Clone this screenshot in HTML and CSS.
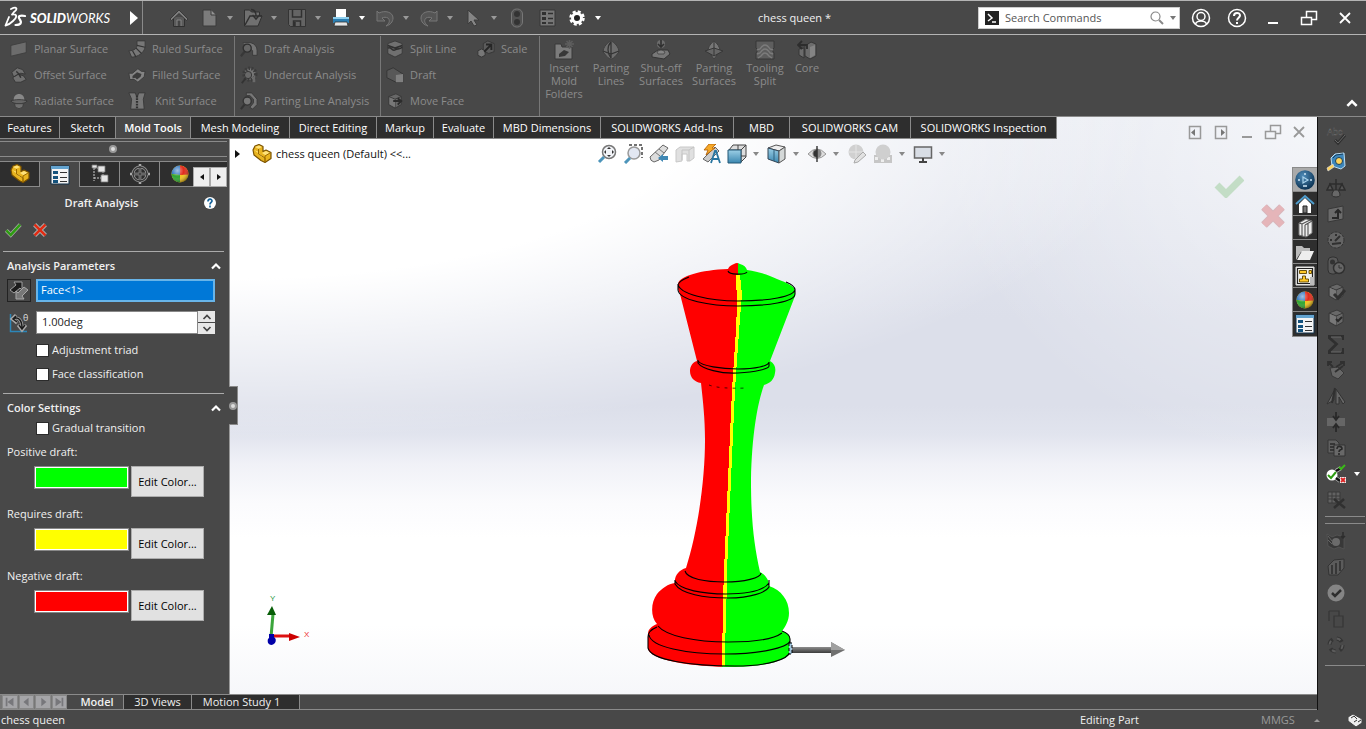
FILE: index.html
```html
<!DOCTYPE html>
<html lang="en">
<head>
<meta charset="utf-8">
<title>SOLIDWORKS - chess queen</title>
<link rel="stylesheet" href="styles.css">
</head>
<body>
<svg class="defs" aria-hidden="true">
  <defs>
    <linearGradient id="cubeBlue" x1="0" y1="0" x2="0" y2="1"><stop offset="0" stop-color="#9ccfe6"/><stop offset="1" stop-color="#3b87b0"/></linearGradient>
    <linearGradient id="metal" x1="0" y1="0" x2="0" y2="1"><stop offset="0" stop-color="#8c8c8c"/><stop offset="1" stop-color="#3c3c3c"/></linearGradient>
    <radialGradient id="globe" cx=".4" cy=".3" r=".7"><stop offset="0" stop-color="#4f8cb9"/><stop offset="1" stop-color="#0c3354"/></radialGradient>
    <radialGradient id="shine" cx=".35" cy=".3" r=".75"><stop offset="0" stop-color="#fff" stop-opacity=".55"/><stop offset=".5" stop-color="#fff" stop-opacity="0"/><stop offset="1" stop-color="#000" stop-opacity=".45"/></radialGradient>
  </defs>
  <symbol id="caret" viewBox="0 0 10 20"><path d="M2 8h6l-3 4z" fill="currentColor"/></symbol>
  <symbol id="chev" viewBox="0 0 12 12"><path d="M2 8.500l4-4 4 4" fill="none" stroke="#fff" stroke-width="2.200"/></symbol>
  <symbol id="part" viewBox="0 0 20 20"><path d="M1 6l2-4 4-1.500 4 2 0 5 3-1.500 5 2.500v6l-6 4-4-2-7-5.500z" fill="#e9b41f" stroke="#7a5200" stroke-width="1.200" stroke-linejoin="round"/><path d="M3 3l4-1.500 3 1.500-3.500 1.800zM10 9l4-2 4 2-4.500 2.200zM2 6l4 1.500v2l3 3 4 1.500" fill="#ffe27a"/><path d="M6.500 5v5l6.500 4v4M13 12v6M13 12l5-3" fill="none" stroke="#9b6a00"/></symbol>
  <symbol id="sphere" viewBox="0 0 20 20"><circle cx="10" cy="10" r="8.500" fill="#f2c21a"/><path d="M10 11V1.500a8.500 8.500 0 0 1 8.500 9z" fill="#e02a1c"/><path d="M10 11l-8.500-1A8.500 8.500 0 0 1 10 1.500z" fill="#2f74bf"/><path d="M10 11v7.500a8.500 8.500 0 0 1-8.500-8.500z" fill="#2fa532"/><circle cx="10" cy="10" r="8.500" fill="url(#shine)"/></symbol>
  <symbol id="list" viewBox="0 0 20 20"><path d="M1 1h18v18H1z" fill="#f4f4f4" stroke="#10304a"/><path d="M1 1h18v3H1z" fill="#63a3cf"/><path d="M3 6h5v3H3zM3 11h5v3H3zM3 15h5v3H3z" fill="#14537e"/><path d="M10 7.500h7M10 12.500h7M10 16.500h7" stroke="#333" stroke-width="1.200"/></symbol>
  <symbol id="restore" viewBox="0 0 20 20"><path d="M7.500 9V3.500h10v8h-5M2.500 9.500h10v7h-10z" fill="none" stroke="currentColor" stroke-width="1.500"/></symbol>
  <symbol id="close" viewBox="0 0 20 20"><path d="M5 5l10 10M15 5L5 15" stroke="currentColor" stroke-width="1.800"/></symbol>
  <symbol id="check" viewBox="0 0 20 20"><path d="M2.500 10.500l5 5L18 4" fill="none" stroke="#aaa" stroke-width="4.400"/><path d="M2.500 10.500l5 5L18 4" fill="none" stroke="#2e9c12" stroke-width="2.800"/></symbol>
  <symbol id="cross" viewBox="0 0 20 20"><path d="M4 4l12 12M16 4L4 16" stroke="#aaa" stroke-width="4.800"/><path d="M4 4l12 12M16 4L4 16" stroke="#e22b12" stroke-width="2.800"/></symbol>
  <symbol id="cube" viewBox="0 0 20 20"><path d="M3 5l8-3 6 3v9l-7 4-7-4z" fill="#686868" stroke="#393939"/><path d="M3 5l7 3 7-3M10 8v10" fill="none" stroke="#383838"/><path d="M4 6l6 2.500V17l-6-3.500z" fill="#787878"/></symbol>
</svg>

<header class="titlebar">
  <div class="brand">
    <svg width="24" height="24" viewBox="0 0 24 24" aria-hidden="true"><g fill="none" stroke="#fff" stroke-linecap="round" stroke-linejoin="round"><path d="M8 3c6-3 7 0 3 3L9 8.500c6-1 5 3 1 6.500-3 3-5 4-7.500 4.500L6 11" stroke-width="1.800"/><path d="M22 10c-5-1-7.500 0-5.500 3 3 4 1 6-4 6" stroke-width="2.200"/></g></svg>
    <span class="wordmark"><b>SOLID</b>WORKS</span>
    <button class="expand" aria-label="Show menus"><svg width="8" height="14" viewBox="0 0 8 14"><path d="M0 0l8 7-8 7z" fill="#fff"/></svg></button>
  </div>
  <nav class="quick" aria-label="Quick access">
    <button class="single" aria-label="Home"><svg viewBox="0 0 20 20"><path d="M4.500 9v9.500h11V9" fill="#5a5a5a" stroke="#303030"/><path d="M1 11l9-9 9 9-1.500 1.500L10 5.500l-7.500 7z" fill="#7c7c7c" stroke="#303030" stroke-width=".8"/><path d="M8 18v-6h4v6" fill="#444" stroke="#858585"/></svg></button>
    <button class="split" aria-label="New"><svg viewBox="0 0 20 20"><path d="M4 2h8l5 5v11H4z" fill="#7c7c7c" stroke="#3a3a3a"/><path d="M12 2v5h5" fill="#939393" stroke="#3a3a3a"/></svg><svg class="caret"><use href="#caret"/></svg></button>
    <button class="split" aria-label="Open"><svg viewBox="0 0 20 20"><path d="M1.500 2h5l2 2h8v4h2.500l-4 10H1.500z" fill="#707070" stroke="#303030"/><path d="M2 17l5-9h12M8 1.500c4 0 5 3 5 7M9.500 7l3.500 4 3.500-4" fill="none" stroke="#303030" stroke-width="1.500"/></svg><svg class="caret"><use href="#caret"/></svg></button>
    <button class="split" aria-label="Save"><svg viewBox="0 0 20 20"><path d="M1.500 1.500h17v17h-15l-2-2z" fill="#646464" stroke="#343434"/><path d="M5.500 2v7h9V2M6.500 18v-5h7v5M8 14v4" fill="none" stroke="#303030" stroke-width="1.500"/></svg><svg class="caret"><use href="#caret"/></svg></button>
    <button class="split on" aria-label="Print"><svg viewBox="0 0 20 20"><path d="M5 1h10v8H5z" fill="#fff"/><path d="M2 9h16v6H2z" fill="#2c7fb2"/><path d="M2 9h16v2H2z" fill="#8fd0ef"/><path d="M4 14h12l1 4H3z" fill="#e6e6e6" stroke="#333" stroke-width=".8"/></svg><svg class="caret"><use href="#caret"/></svg></button>
    <button class="split" aria-label="Undo"><svg viewBox="0 0 20 20"><path d="M2 3l2 2c6-3 14-1 14 5 0 4-3 7-7 8 4-3 4-6 2-8-2-1-4-1-6 0l3 3H2z" fill="#555" stroke="#777"/></svg><svg class="caret"><use href="#caret"/></svg></button>
    <button class="split" aria-label="Redo"><svg viewBox="0 0 20 20"><path d="M18 3l-2 2C10 2 2 4 2 10c0 4 3 7 7 8-4-3-4-6-2-8 2-1 4-1 6 0l-3 3h8z" fill="#555" stroke="#777"/></svg><svg class="caret"><use href="#caret"/></svg></button>
    <button class="split" aria-label="Select"><svg viewBox="0 0 20 20"><path d="M5 2l11 10h-5l3 5-3 1-3-5-3 3z" fill="#858585" stroke="#3c3c3c"/></svg><svg class="caret"><use href="#caret"/></svg></button>
    <button class="single" aria-label="Rebuild"><svg viewBox="0 0 20 20"><rect x="4.500" y="1" width="11" height="18" rx="5" fill="#525252" stroke="#777"/><circle cx="10" cy="6" r="3" fill="#333"/><circle cx="10" cy="14" r="3" fill="#333"/></svg></button>
    <button class="single" aria-label="File properties"><svg viewBox="0 0 20 20"><path d="M3 2h15v16H3z" fill="#777" stroke="#363636"/><path d="M5 4h4v3H5zM5 9h4v3H5zM5 14h4v2H5z" fill="#303030"/><path d="M11 5.500h5M11 10.500h5M11 15h5" stroke="#303030" stroke-width="1.500"/></svg></button>
    <button class="split on" aria-label="Options"><svg viewBox="0 0 20 20"><circle cx="10" cy="10" r="6.500" fill="none" stroke="#fff" stroke-width="2.500" stroke-dasharray="3 2.100"/><circle cx="10" cy="10" r="4.500" fill="#222" stroke="#fff" stroke-width="3"/></svg><svg class="caret"><use href="#caret"/></svg></button>
  </nav>
  <h1 class="doc-title">chess queen *</h1>
  <label class="search">
    <svg width="14" height="14" viewBox="0 0 14 14" aria-hidden="true"><path d="M0 0h14v14H0z" fill="#222"/><path d="M3 3l4 4-4 3M7 11h4" fill="none" stroke="#fff" stroke-width="1.500"/></svg>
    <input type="text" placeholder="Search Commands" aria-label="Search Commands">
    <svg width="14" height="14" viewBox="0 0 14 14" aria-hidden="true"><circle cx="5.500" cy="5.500" r="4.500" fill="none" stroke="#888" stroke-width="1.200"/><path d="M9 9l4 4" stroke="#888" stroke-width="2"/></svg>
    <svg width="10" height="20" class="dark"><use href="#caret"/></svg>
  </label>
  <div class="window-buttons">
    <button aria-label="Account"><svg viewBox="0 0 20 20" fill="none" stroke="#fff" stroke-width="1.500"><circle cx="10" cy="10" r="8.500"/><circle cx="10" cy="8.500" r="4"/><path d="M4.500 16c1-3 3-3 5.500-3s4.500 0 5.500 3"/></svg></button>
    <button aria-label="Help"><svg viewBox="0 0 20 20" fill="none" stroke="#fff"><circle cx="10" cy="10" r="8.500" stroke-width="1.500"/><path d="M7 8c0-4 6-4 6-.5 0 2-3 2.500-3 5M10 14v2" stroke-width="2"/></svg></button>
    <button aria-label="Minimize"><svg viewBox="0 0 20 20"><path d="M5 15h10" stroke="#fff" stroke-width="2"/></svg></button>
    <button aria-label="Restore"><svg class="white"><use href="#restore"/></svg></button>
    <button aria-label="Close"><svg class="white"><use href="#close"/></svg></button>
  </div>
</header>

<section class="ribbon" aria-label="Mold Tools commands">
  <div class="group g1">
    <button><svg viewBox="0 0 20 20"><path d="M1 6l17-4v12L1 18z" fill="#6c6c6c" stroke="#3e3e3e"/></svg>Planar Surface</button>
    <button><svg viewBox="0 0 20 20"><path d="M2 7l6-5 6 2 3 5-5-1-8 4zM3 13l6-4 6 2 3 4-6 3-6 0z" fill="#707070" stroke="#363636"/><path d="M7 6c3 2 4 4 5 7" stroke="#333" fill="none" stroke-width="1.500"/></svg>Offset Surface</button>
    <button><svg viewBox="0 0 20 20"><path d="M4 9c0-9 12-9 12 0z" fill="#888"/><path d="M1 10c3-2 15-2 18 0-2 4-16 4-18 0z" fill="#666" stroke="#363636"/><path d="M5 13h10l-1 4q-4 3-8 0z" fill="#707070" stroke="#3d3d3d"/></svg>Radiate Surface</button>
  </div>
  <div class="group g2">
    <button><svg viewBox="0 0 20 20"><path d="M10 1h9v7c-1 6-8 11-15 11l-3-7c6 0 9-3 9-6z" fill="#777" stroke="#3a3a3a"/><path d="M10 6l9 2M9 9l6 6M5 12l4 7" stroke="#333" stroke-width="1.300"/></svg>Ruled Surface</button>
    <button><svg viewBox="0 0 20 20"><path d="M1 8l4 0 6-5 4 3 4 0-1 6-7 6-4-3-5 0z" fill="#848484" stroke="#3a3a3a"/><path d="M5 11l5-4 5 2-1 3-4 3-2-2-3 1z" fill="#3c3c3c"/></svg>Filled Surface</button>
    <button class="indent"><svg viewBox="0 0 20 20"><path d="M1 1h7l2 5 2-5h7l-2 7 1 11H3l1-11z" fill="#777" stroke="#393939"/><path d="M10 4v15" stroke="#303030" stroke-width="2.500" stroke-dasharray="2 1"/></svg>Knit Surface</button>
  </div>
  <div class="group g3 ruled">
    <button><svg viewBox="0 0 20 20"><path d="M3 3h9q7 2 7 9v5h-5v-5l-3-3" fill="#747474" stroke="#393939"/><circle cx="8" cy="9" r="4.500" fill="#666" stroke="#2f2f2f" stroke-width="1.500"/><path d="M5 13l-4 5" stroke="#383838" stroke-width="2.500"/></svg>Draft Analysis</button>
    <button><svg viewBox="0 0 20 20"><circle cx="11" cy="9" r="6.500" fill="#777" stroke="#3c3c3c" stroke-width="4" stroke-dasharray="2 1.500"/><circle cx="9" cy="10" r="4" fill="#696969" stroke="#303030"/><path d="M6 14l-4 5" stroke="#333" stroke-width="2"/><path d="M14 12h3v6h-3" fill="#6a6a6a"/></svg>Undercut Analysis</button>
    <button><svg viewBox="0 0 20 20"><path d="M7 1h6l6 7v6l-5 5-3-2 4-5v-4l-4-4-4 0z" fill="#777" stroke="#393939"/><circle cx="8" cy="10" r="4.500" fill="#777" stroke="#333" stroke-width="1.500"/><path d="M5 14l-4 5" stroke="#333" stroke-width="2.500"/></svg>Parting Line Analysis</button>
  </div>
  <div class="group g4 ruled">
    <button><svg viewBox="0 0 20 20"><path d="M2 4l8-3 8 3v11l-8 4-8-4z" fill="#707070" stroke="#393939"/><path d="M2 9c4-2 5 4 8 2s5 0 8-3M2 6l8 3 8-3" fill="none" stroke="#303030" stroke-width="1.800"/></svg>Split Line</button>
    <button><svg viewBox="0 0 20 20"><path d="M1 5l7-3 11 7v9h-8l-10-5z" fill="#585858" stroke="#333"/><path d="M11 10l8-1v9h-8z" fill="#808080"/></svg>Draft</button>
    <button><svg viewBox="0 0 20 20"><use href="#cube"/><path d="M8 10h8M13 7l4 3-4 4" fill="none" stroke="#2c2c2c" stroke-width="2"/></svg>Move Face</button>
  </div>
  <div class="group g5">
    <button><svg viewBox="0 0 20 20"><path d="M7 4l5-3 7 3v9l-6 2-6-3z" fill="#5c5c5c" stroke="#363636"/><path d="M1 12l4-2 4 2v5l-4 2-4-2z" fill="#777" stroke="#363636"/><path d="M8 13l7-7M10 5h6v6" fill="none" stroke="#262626" stroke-width="2.200"/></svg>Scale</button>
  </div>
  <div class="large ruled">
    <button class="w48"><svg viewBox="0 0 20 20"><path d="M1 4h6l1 3h10v12H1z" fill="#7c7c7c" stroke="#393939"/><path d="M5 14l5-4 5 2-4 4-6 1z" fill="#383838"/><path d="M11 4h9M15.500 0v9M12.500 1l6 6M18.500 1l-6 6" stroke="#5d5d5d" stroke-width="1.500"/></svg>Insert<br>Mold<br>Folders</button>
    <button class="w46"><svg viewBox="0 0 20 20"><path d="M2 12C2 7 7 2 10 1c3 1 8 6 8 11-3 3-5 7-8 7s-5-4-8-7z" fill="#6e6e6e" stroke="#3f3f3f"/><path d="M2 11l8 3 8-3M10 2v16M10 2c-4 4-4 11 0 16" fill="none" stroke="#343434" stroke-width="1.300"/></svg>Parting<br>Lines</button>
    <button class="w54"><svg viewBox="0 0 20 20"><circle cx="10" cy="4" r="4" fill="#6c6c6c"/><path d="M10 0v7M7 4l3 3 3-3" fill="none" stroke="#303030" stroke-width="1.600"/><path d="M1 14l6-4h10l2 4-6 5-12-2z" fill="#777" stroke="#343434"/><path d="M6 12q4-4 8 0l-1 2H7z" fill="#848484" stroke="#3b3b3b" stroke-width=".7"/></svg>Shut-off<br>Surfaces</button>
    <button class="w52"><svg viewBox="0 0 20 20"><path d="M4 11c0-4 3-8 6-10 3 2 6 6 6 10l-6 8z" fill="#777" stroke="#3f3f3f"/><path d="M1 11l9-3 9 3-9 5z" fill="#666" stroke="#373737"/><path d="M10 2v14" stroke="#343434"/></svg>Parting<br>Surfaces</button>
    <button class="w50"><svg viewBox="0 0 20 20"><path d="M1 1h18v7l-2 2 2 3v6H1v-6l2-3-2-2z" fill="#5e5e5e" stroke="#373737"/><path d="M2 10l3-1q5-8 10 0l3 1M2 14l3-1q5-8 10 0l3 1M3 18l3-2q4-6 8 0l3 2" fill="none" stroke="#7c7c7c" stroke-width="1.400"/></svg>Tooling<br>Split</button>
    <button class="w34"><svg viewBox="0 0 20 20"><path d="M8 6l6-4 5 2v12l-6 3-5-3zM2 9l5-1v10l-5-3z" fill="#6c6c6c" stroke="#363636"/><path d="M13 7l5-2v10l-5 3z" fill="#848484"/><path d="M5 1L1 5l4 4M1 5h9v4" fill="none" stroke="#2d2d2d" stroke-width="1.800"/></svg>Core</button>
  </div>
  <button class="collapse" aria-label="Collapse ribbon"><svg width="14" height="14"><use href="#chev"/></svg></button>
</section>

<main class="workspace">
  <nav class="tabs" aria-label="Command manager">
    <a href="#">Features</a><a href="#">Sketch</a><a href="#" class="active">Mold Tools</a><a href="#">Mesh Modeling</a><a href="#">Direct Editing</a><a href="#">Markup</a><a href="#">Evaluate</a><a href="#">MBD Dimensions</a><a href="#">SOLIDWORKS Add-Ins</a><a href="#">MBD</a><a href="#">SOLIDWORKS CAM</a><a href="#">SOLIDWORKS Inspection</a>
  </nav>

  <aside class="panel">
    <div class="grip"><i class="dot"></i></div>
    <div class="pm-tabs">
      <button aria-label="Feature tree"><svg><use href="#part"/></svg></button>
      <button class="active" aria-label="Property manager"><svg><use href="#list"/></svg></button>
      <button aria-label="Configurations"><svg viewBox="0 0 20 20"><path d="M4 1v16M4 4h5M4 14h7M13 7v4" stroke="#ccc" stroke-dasharray="2 1" fill="none"/><path d="M8 2h7v6H8zM11 11h7v7h-7zM2 1h5v3H2z" fill="#e5e5e5" stroke="#777" stroke-width=".8"/></svg></button>
      <button aria-label="Dimensions"><svg viewBox="0 0 20 20"><circle cx="10" cy="10" r="7" fill="none" stroke="#888" stroke-width="3"/><path d="M10 0v20M0 10h20" stroke="#aaa" stroke-width="2.500"/><circle cx="10" cy="10" r="7" fill="none" stroke="#222" stroke-width="1"/><path d="M10 2v16M2 10h16" stroke="#222"/></svg></button>
      <button aria-label="Display manager"><svg><use href="#sphere"/></svg></button>
      <span class="scrollers"><button aria-label="Scroll left"><svg viewBox="0 0 10 10"><path d="M7 2v6L3 5z" fill="#111"/></svg></button><button aria-label="Scroll right"><svg viewBox="0 0 10 10"><path d="M3 2v6l4-3z" fill="#111"/></svg></button></span>
    </div>
    <div class="pm-title">
      <h2>Draft Analysis</h2>
      <button aria-label="Help"><svg viewBox="0 0 14 14"><circle cx="7" cy="7" r="6" fill="#fff"/><path d="M5 5.500c0-3 4-3 4-.5C9 6.500 7 6.500 7 8.500M7 9.500v2" fill="none" stroke="#16639a" stroke-width="1.700"/></svg></button>
    </div>
    <div class="confirm">
      <button aria-label="OK"><svg><use href="#check"/></svg></button>
      <button aria-label="Cancel"><svg><use href="#cross"/></svg></button>
    </div>
    <section class="block params">
      <h3>Analysis Parameters <svg width="12" height="12"><use href="#chev"/></svg></h3>
      <div class="field">
        <button class="flip" aria-label="Reverse direction"><svg viewBox="0 0 20 20"><path d="M1 9l6-5-2-3h8v8l-2-2-6 5z" fill="#1b1b1b" stroke="#a0a0a0"/><path d="M19 9l-6 6 2 3H7v-8l2 2 6-6z" fill="#777" stroke="#a8a8a8"/></svg></button>
        <input class="picked" type="text" value="Face&lt;1&gt;" aria-label="Direction of pull">
      </div>
      <div class="field">
        <span class="angle"><svg viewBox="0 0 20 20" aria-hidden="true"><path d="M1.500 1v17.500H18" fill="none" stroke="#2c86b8" stroke-width="1.500"/><path d="M4 6c6-3 9 2 9 9M7 2L3 6l5 4M9 12l4 5 4-5" fill="none" stroke="#aaa" stroke-width="3"/><path d="M4 6c6-3 9 2 9 9M7 3L4 6l4 3M10 12l3 4 3-4" fill="none" stroke="#1c1c1c" stroke-width="1.500"/><text x="14" y="8" font-size="9" fill="#ddd">θ</text></svg></span>
        <span class="number"><input type="text" value="1.00deg" aria-label="Draft angle"><span class="spin"><button aria-label="Increase"><svg viewBox="0 0 10 6"><path d="M1.500 5L5 1.500 8.500 5" fill="none" stroke="#444" stroke-width="1.700"/></svg></button><button aria-label="Decrease"><svg viewBox="0 0 10 6"><path d="M1.500 1L5 4.500 8.500 1" fill="none" stroke="#444" stroke-width="1.700"/></svg></button></span></span>
      </div>
      <label class="tick"><input type="checkbox">Adjustment triad</label>
      <label class="tick"><input type="checkbox">Face classification</label>
    </section>
    <section class="block colors">
      <h3>Color Settings <svg width="12" height="12"><use href="#chev"/></svg></h3>
      <label class="tick"><input type="checkbox">Gradual transition</label>
      <p>Positive draft:</p>
      <div class="swatch-row"><span class="swatch green"></span><button>Edit Color...</button></div>
      <p>Requires draft:</p>
      <div class="swatch-row"><span class="swatch yellow"></span><button>Edit Color...</button></div>
      <p>Negative draft:</p>
      <div class="swatch-row"><span class="swatch red"></span><button>Edit Color...</button></div>
    </section>
    <span class="handle"><i class="dot"></i></span>
  </aside>

  <section class="viewport" aria-label="Graphics area">
    <svg class="model" viewBox="230 117 1087 577" role="img" aria-label="Chess queen">
      <defs>
        <clipPath id="queen"><path d="M728 269c1-3 4-4 6-5q3-2 6 0c4 1 6 3 7 6 13 2 22 5 30 9 10 4 18 7 18 12v5l-25 65c5 3 6 7 5 12-1 7-5 10-11 12C757 405 752 435 751 480c0 40 3 65 9 92 5 3 9 7 9 14 12 4 20 14 20 27 0 8-4 14-7 18 6 2 8 5 8 8v13c0 7-23 15-55 15-44 0-87-7-87-19v-14c0-5 4-8 9-10-7-8-6-22 0-30 5-6 11-10 18-11-1-7 4-13 11-15C698 530 705 480 705 440c0-22-2-38-4-57-7-1-11-6-11-12 0-5 3-9 7-10l-17-67-2-5v-5c1-8 23-14 50-15z"/></clipPath>
      </defs>
      <g clip-path="url(#queen)" shape-rendering="crispEdges">
        <path d="M640 255h98l2 45-3 60-6 60-7 150-1 100h-83z" fill="#f00"/>
        <path d="M738 255h62v420h-78l2-105 7-150 5-60 3-60z" fill="#0f0"/>
        <path d="M736 275h4l2 20-1 10-4 55-2 30-8 180v28l-1 3-1 65h-3l1-66 1-30 8-180 4-60 1-25z" fill="#ff0"/>
      </g>
      <g fill="none" stroke="#000" stroke-width="1.100">
        <path d="M728 271c1 4 17 4 19 1M678 286c0-4 4-6 11-9M795 290c0-4-4-6-9-8M678 284c1 10 31 17 60 17s57-4 57-12M678 284v6c1 10 31 16 60 16s57-4 57-12v-5"/>
        <path d="M698 360v3c4 6 23 11 40 10s31-4 31-7v-4M698 361c4 5 23 8 40 8s31-3 31-7"/>
        <path d="M709 385q10 4 38 3" stroke-width=".7" stroke-dasharray="3 5"/>
        <path d="M685 571c2 8 21 11 40 11s36-4 36-9M675 580v4c6 10 29 14 53 14s38-6 41-11v-7M675 581c5 9 28 13 51 13s38-4 43-11"/>
        <path d="M658 626c8 10 37 16 70 16 28 0 46-3 54-9M649 635c2 12 37 19 76 19 34 0 62-6 65-13M657 627c-5 2-9 5-9 10v11c3 12 42 18 87 18 34 0 53-7 55-14v-13q0-5-8-8"/>
      </g>
      <path d="M791 647h41v6h-41z" fill="url(#metal)"/><path d="M831 642l14 8-14 7z" fill="#707070"/><path d="M831 642l14 8h-14z" fill="#a0a0a0"/><path d="M789 643h3v11h-3z" fill="#9fc4dc" stroke="#000" stroke-dasharray="3 2"/>
      <path d="M271 637l2-23" stroke="#3ba53b" stroke-width="3"/><path d="M267 615l5-9 4 9z" fill="#085e08"/><path d="M273 636h18" stroke="#d11" stroke-width="3"/><path d="M289 633l11 4-11 4z" fill="#c00"/><path d="M269 634h5v3q3 2 1 6-4 4-7 0-1-4 1-5z" fill="#0000a8"/>
      <text x="270" y="601" fill="#2d9a4a" class="axis">Y</text><text x="304" y="637" fill="#e33" class="axis">X</text>
    </svg>
    <div class="view-head">
      <button class="tree" aria-label="Flyout tree"><svg width="8" height="10" viewBox="0 0 8 10"><path d="M1 1v8l5-4z" fill="#111"/></svg><svg width="20" height="20"><use href="#part"/></svg><span>chess queen (Default) &lt;&lt;...</span></button>
      <div class="hud">
        <button aria-label="Zoom to fit"><svg viewBox="0 0 20 20"><circle cx="12" cy="8" r="6.500" fill="#f2f4f8" stroke="#777" stroke-width="1.500"/><path d="M7 13l-5 5" stroke="#4c94ba" stroke-width="3"/><path d="M12 3l2 2h-4zM12 13l2-2h-4zM7 8l2-2v4zM17 8l-2-2v4z" fill="#333"/></svg></button>
        <button aria-label="Zoom to area"><svg viewBox="0 0 20 20"><path d="M6 1h13v13" fill="none" stroke="#444" stroke-width="1.500" stroke-dasharray="3 2"/><circle cx="11" cy="9" r="6" fill="#e2e7f2" stroke="#999" stroke-width="1.500"/><path d="M7 14l-5 5" stroke="#4c94ba" stroke-width="3"/></svg></button>
        <button aria-label="Previous view"><svg viewBox="0 0 20 20"><path d="M1 13L14 1l5 3-9 12-5 2q-4-1-4-5z" fill="#ddd" stroke="#666"/><path d="M6 8l5 4M10 5l5 4" stroke="#777"/><path d="M9 14l5-4v2h5v4h-5v2z" fill="#4088b4"/></svg></button>
        <button aria-label="Section view"><svg viewBox="0 0 20 20"><path d="M1 6l4-3h14v11l-4 3h-3v-7H7v7l-6 1z" fill="#e0e0e0" stroke="#c8c8c8"/><path d="M7 6h7v11M7 6v10M14 6l5-3" fill="none" stroke="#c4c4c4"/></svg></button>
        <button aria-label="Dynamic annotation views"><svg viewBox="0 0 20 20"><path d="M2 15L14 3l4 4L7 18z" fill="#ccc" stroke="#666"/><path d="M8 0h7l-4 4h3l-9 7 2-5H3z" fill="#f6a928" stroke="#b05b00" stroke-width=".8"/><path d="M10 19l4-12h1l4 12M12 15h5" stroke="#2875a0" stroke-width="1.800" fill="none"/></svg></button>
        <button class="more" aria-label="View orientation"><svg viewBox="0 0 20 20"><path d="M6 1h13v12l-5 5V6H2z" fill="#ddd" stroke="#444"/><path d="M1 6h13v13H1z" fill="url(#cubeBlue)" stroke="#235674"/><path d="M14 6l5-5M14 12h5M11 1v5" stroke="#444"/></svg><svg class="caret"><use href="#caret"/></svg></button>
        <button class="more" aria-label="Display style"><svg viewBox="0 0 20 20"><path d="M1 4l8-3 9 2-6 4z" fill="#eee" stroke="#555"/><path d="M1 4l11 3v12l-11-4z" fill="url(#cubeBlue)" stroke="#345"/><path d="M12 7l6-4v12l-6 4z" fill="#d4d8d8" stroke="#555"/><path d="M7 6v11" stroke="#2f5f7a"/></svg><svg class="caret"><use href="#caret"/></svg></button>
        <button class="more" aria-label="Hide or show items"><svg viewBox="0 0 20 20"><path d="M1 10q9-10 18 0-9 9-18 0z" fill="#ddd" stroke="#999"/><circle cx="10" cy="9.500" r="4.500" fill="#888"/><path d="M10 2v16" stroke="#222" stroke-width="1.300"/><path d="M10 6a3.500 3.500 0 0 0 0 7z" fill="#333"/></svg><svg class="caret"><use href="#caret"/></svg></button>
        <button aria-label="Edit appearance"><svg viewBox="0 0 20 20"><circle cx="9" cy="8" r="7.500" fill="#d0d0d0"/><path d="M9 1v14M2 8h14" stroke="#e4e4e4"/><path d="M8 16l8-8 3 3-8 7-4 1z" fill="#e2e2e2" stroke="#aaa"/></svg></button>
        <button class="more" aria-label="Apply scene"><svg viewBox="0 0 20 20"><path d="M1 11h18v8H1z" fill="#c6c6c6"/><path d="M2 13h3v3H2zM8 15h3v3H8zM14 13h3v3h-3z" fill="#eee"/><circle cx="10" cy="8" r="7.500" fill="#cfcfcf"/></svg><svg class="caret"><use href="#caret"/></svg></button>
        <button class="more" aria-label="View settings"><svg viewBox="0 0 20 20"><path d="M1.500 3h17v11h-17z" fill="#d8dde5" stroke="#666" stroke-width="1.500"/><path d="M10 14v4M6 18h8" stroke="#444" stroke-width="2"/></svg><svg class="caret"><use href="#caret"/></svg></button>
      </div>
    </div>
    <div class="doc-buttons">
      <button aria-label="Previous pane"><svg viewBox="0 0 20 20"><path d="M4.500 4.500h11v12h-11z" fill="none" stroke="#999" stroke-width="1.500"/><path d="M10 7v7l-4-3.500z" fill="#777"/></svg></button>
      <button aria-label="Next pane"><svg viewBox="0 0 20 20"><path d="M4.500 4.500h11v12h-11z" fill="none" stroke="#999" stroke-width="1.500"/><path d="M10 7v7l4-3.500z" fill="#777"/></svg></button>
      <button aria-label="Minimize document"><svg viewBox="0 0 20 20"><path d="M5 15h10" stroke="#999" stroke-width="2"/></svg></button>
      <button aria-label="Restore document"><svg><use href="#restore"/></svg></button>
      <button aria-label="Close document"><svg><use href="#close"/></svg></button>
    </div>
    <div class="corner">
      <button aria-label="Accept"><svg viewBox="0 0 30 24"><path d="M3 11l9 9L28 4" fill="none" stroke="#c3ddc6" stroke-width="7"/></svg></button>
      <button aria-label="Discard"><svg viewBox="0 0 26 26"><path d="M4 4l18 18M22 4L4 22" stroke="#d9b6bb" stroke-width="8"/><path d="M4 4l18 18M22 4L4 22" stroke="#e5b5b9" stroke-width="6"/></svg></button>
    </div>
    <div class="taskpane">
      <button class="active" aria-label="3DEXPERIENCE"><svg viewBox="0 0 20 20"><circle cx="10" cy="10" r="9.800" fill="url(#globe)"/><path d="M8 7v6l5-3z" fill="none" stroke="#aad3ec" stroke-width="1.200"/><path d="M3 10h2M15 10h2M10 3v2M8 16h4" stroke="#cfe6f5" stroke-width="1.500"/></svg></button>
      <button aria-label="Resources"><svg viewBox="0 0 20 20"><path d="M4 10l6-6 6 6v9H4z" fill="#fff"/><path d="M1 10l9-8 9 8" fill="none" stroke="#4e9ccc" stroke-width="2"/><path d="M8 12h4v7H8z" fill="#777" stroke="#222"/></svg></button>
      <button aria-label="Design library"><svg viewBox="0 0 20 20"><path d="M4 5l7-4 6 2v12l-6 4-7-2z" fill="#eee" stroke="#777"/><path d="M4 5l3 1v12M7 6l8-4M10 7v12M10 7l7-4M13 5v12" fill="none" stroke="#555" stroke-width="1.100"/></svg></button>
      <button aria-label="File explorer"><svg viewBox="0 0 20 20"><path d="M1 4h6l2 2h6v4h-9L1 18z" fill="#bbb"/><path d="M7 9h12l-4 9H2z" fill="#eee"/></svg></button>
      <button aria-label="View palette"><svg viewBox="0 0 20 20"><path d="M1 1h18v18H1z" fill="#f2f2ee" stroke="#ddd"/><path d="M2.500 2.500h15v15h-15z" fill="none" stroke="#222" stroke-width="1.200"/><path d="M4.500 4.500h7v3h-7zM14 4.500h2.500v3H14zM7.500 10h3v3h3v3h-9v-3h3z" fill="#ffc928" stroke="#5b4300" stroke-width=".9"/><path d="M15 11h4v8h-4z" fill="#bbb"/></svg></button>
      <button aria-label="Appearances"><svg><use href="#sphere"/></svg></button>
      <button aria-label="Custom properties"><svg><use href="#list"/></svg></button>
    </div>
  </section>

  <aside class="sidebar" aria-label="Tools">
    <div class="tools">
      <button aria-label="Spelling"><svg viewBox="0 0 20 20"><text x="1" y="9" class="abc">Abc</text><path d="M9 14l3 3 7-8" fill="none" stroke="#2f2f2f" stroke-width="3"/><path d="M9 14l3 3 7-8" fill="none" stroke="#666"/></svg></button>
      <button aria-label="Measure"><svg viewBox="0 0 20 20"><path d="M5 6l4-4 9-1 1 13-4 3-9-3z" fill="#3d86bb" stroke="#bcdcf0"/><path d="M7 6l3-3 7-1" fill="none" stroke="#163f5e"/><circle cx="13" cy="9" r="3.500" fill="#ffd35a" stroke="#143f60"/><path d="M1 16l6-4 1 3-6 4z" fill="#ffd35a" stroke="#ddd" stroke-width=".7"/></svg></button>
      <button aria-label="Mass properties"><svg viewBox="0 0 20 20"><path d="M10 1v15M3 6h14M4 6l-3 6h6zM16 6l-3 6h6z" fill="#555" stroke="#2d2d2d" stroke-width="1.500"/><path d="M8 12q-5 7 2 7t2-7z" fill="#686868" stroke="#2f2f2f"/></svg></button>
      <button aria-label="Section properties"><svg viewBox="0 0 20 20"><path d="M2 5l15-3v13L2 18z" fill="#6b6b6b" stroke="#383838"/><path d="M6 14h6V7M9 9l3-3 3 3" fill="none" stroke="#292929" stroke-width="2"/></svg></button>
      <button aria-label="Sensor"><svg viewBox="0 0 20 20"><circle cx="10" cy="10" r="8" fill="#646464" stroke="#333" stroke-dasharray="3 1"/><path d="M9 11l5-5M4 10h2M10 4v2M6 14l9-1" stroke="#303030" stroke-width="2"/></svg></button>
      <button aria-label="Performance evaluation"><svg viewBox="0 0 20 20"><rect x="2" y="1" width="10" height="17" rx="4" fill="#595959" stroke="#303030"/><circle cx="6.500" cy="6" r="2.500" fill="#323232"/><circle cx="13" cy="12" r="5.500" fill="#666" stroke="#303030" stroke-width="1.500"/><path d="M13 9v3h3" fill="none" stroke="#303030"/></svg></button>
      <button aria-label="Check entity"><svg viewBox="0 0 20 20"><use href="#cube"/><path d="M8 12l4 4 7-8" fill="none" stroke="#303030" stroke-width="3"/></svg></button>
      <button aria-label="Geometry check"><svg viewBox="0 0 20 20"><use href="#cube"/><path d="M10 11l2 2 4-4" fill="none" stroke="#292929" stroke-width="2"/></svg></button>
      <button aria-label="Equations"><svg viewBox="0 0 20 20"><path d="M17 6V2H3v2l7 6-7 7v2h14v-5M3 3l8 7-8 8" fill="none" stroke="#2f2f2f" stroke-width="2"/><path d="M5 3h10M5 18h10" stroke="#686868"/></svg></button>
      <button aria-label="Import diagnostics"><svg viewBox="0 0 20 20"><path d="M4 8l8-1 6 6-6 6-6-3z" fill="#666" stroke="#383838"/><path d="M2 2l5 5M10 7l8-5M9 12l8-6M2 6V2h4M14 2h4v4" fill="none" stroke="#303030" stroke-width="1.800"/></svg></button>
      <button aria-label="Deviation"><svg viewBox="0 0 20 20"><path d="M1 18L8 5v9zM10 18V3l9 13-2 2-4-7v7z" fill="#666" stroke="#333"/><path d="M6 17l3-15" stroke="#303030" stroke-width="2"/></svg></button>
      <button aria-label="Thickness"><svg viewBox="0 0 20 20"><path d="M1 6h18v8H1z" fill="#666"/><path d="M10 0v7M7 4l3 4 3-4M10 20v-7M7 16l3-4 3 4" fill="none" stroke="#292929" stroke-width="1.800"/></svg></button>
      <button aria-label="Compare documents"><svg viewBox="0 0 20 20"><path d="M2 2h8l3 3v10H2z" fill="#606060" stroke="#343434"/><path d="M8 7h11v11H8z" fill="#686868" stroke="#333"/><path d="M4 6h5M4 9h4M4 12h4M11 11c0-4 5-3 5 0q-3 1-3 3m0 1v2" stroke="#292929" fill="none" stroke-width="1.600"/></svg></button>
      <button class="more" aria-label="Evaluate design"><svg viewBox="0 0 20 20"><circle cx="6" cy="11" r="5.500" fill="#fff"/><path d="M2 11l3 3 5-6" fill="none" stroke="#2e9c12" stroke-width="2"/><path d="M10 7l5-3M10 14l4 3" stroke="#bbb" stroke-width="4"/><path d="M10 7l5-3M10 14l4 3" stroke="#111" stroke-width="2.500"/><path d="M13 3l2 2 4-4" stroke="#3aba18" stroke-width="2" fill="none"/><path d="M14 13h6v6h-6z" fill="#eee"/><path d="M15 14l4 4M19 14l-4 4" stroke="#d22" stroke-width="1.800"/></svg><svg class="caret"><use href="#caret"/></svg></button>
      <button aria-label="Delete table"><svg viewBox="0 0 20 20"><path d="M2 2h12v11H2z" fill="#626262" stroke="#383838"/><path d="M2 6h12M2 9h12M6 2v11M10 2v11" stroke="#3b3b3b"/><path d="M8 9l11 9M18 9L8 18" stroke="#303030" stroke-width="2.500"/></svg></button>
    </div>
    <div class="tools second">
      <button aria-label="Simulation"><svg viewBox="0 0 20 20"><path d="M1 3l5 3 5-2 7 2v12l-5-2-5 2-6-3z" fill="#383838" stroke="#595959" stroke-width=".7"/><circle cx="10" cy="11" r="4" fill="#6b6b6b"/><path d="M2 5l4 5M2 9l4 4" stroke="#666"/><path d="M17 1v6M15 5l2 2 2-2" stroke="#2d2d2d" fill="none" stroke-width="1.500"/></svg></button>
      <button aria-label="Costing"><svg viewBox="0 0 20 20"><path d="M2 9l6-6 10-1v9l-6 7H3z" fill="#5b5b5b" stroke="#333"/><path d="M6 8l0 9M10 6v11M14 4v10" stroke="#343434" stroke-width="1.800"/></svg></button>
      <button aria-label="Verify"><svg viewBox="0 0 20 20"><circle cx="10" cy="10" r="8.500" fill="#858585"/><path d="M6 10l3 3 6-6" fill="none" stroke="#2e2e2e" stroke-width="2.500"/></svg></button>
      <button aria-label="Copy"><svg viewBox="0 0 20 20"><path d="M3 2h10v5M3 2v10M8 7h9v11H8z" fill="none" stroke="#363636" stroke-width="1.200"/></svg></button>
      <button aria-label="Cycle"><svg viewBox="0 0 20 20"><circle cx="10" cy="10" r="6.500" fill="none" stroke="#353535" stroke-width="4" stroke-dasharray="6 4.200"/><circle cx="10" cy="10" r="6.500" fill="none" stroke="#5b5b5b" stroke-width="2" stroke-dasharray="4 6.200"/></svg></button>
    </div>
  </aside>

  <nav class="sheets" aria-label="Model tabs">
    <span class="nav-keys"><button aria-label="First"><svg viewBox="0 0 14 14"><path d="M3 2v10" stroke="#77777b" stroke-width="2"/><path d="M11 2v10L4 7z" fill="#77777b"/></svg></button><button aria-label="Previous"><svg viewBox="0 0 14 14"><path d="M10 2v10L4 7z" fill="#77777b"/></svg></button><button aria-label="Next"><svg viewBox="0 0 14 14"><path d="M5 2v10l6-5z" fill="#77777b"/></svg></button><button aria-label="Last"><svg viewBox="0 0 14 14"><path d="M11 2v10" stroke="#77777b" stroke-width="2"/><path d="M3 2v10l7-5z" fill="#77777b"/></svg></button></span>
    <a href="#" class="active">Model</a><a href="#">3D Views</a><a href="#" class="motion">Motion Study 1</a>
  </nav>
</main>

<footer class="status">
  <span class="name">chess queen</span>
  <span class="mode">Editing Part</span>
  <button class="units">MMGS</button>
  <svg width="10" height="10" viewBox="0 0 10 10" aria-hidden="true"><path d="M2 7h6L5 4z" fill="#999"/></svg>
  <button class="tag" aria-label="Tags"><svg viewBox="0 0 18 16"><path d="M2 5l5-3 9 5v4l-6 4-8-6z" fill="#eee" stroke="#444"/><path d="M5 6l3-2 3 3M8 10l3-2M12 10l3-2" stroke="#333" fill="none"/></svg></button>
</footer>
</body>
</html>
```
FILE: styles.css
```css
* { box-sizing: border-box; }

:root {
  --bg: #484848;
  --dark: #2e2e2e;
  --line: #8a8a8a;
}

body {
  margin: 0;
  height: 100vh;
  display: flex;
  flex-direction: column;
  overflow: hidden;
  background: var(--bg);
  color: #f0f0f0;
  font: 11px/16px "Open Sans", "Noto Sans", sans-serif;
}

button {
  display: flex;
  align-items: center;
  justify-content: center;
  padding: 0;
  border: 0;
  background: none;
  color: inherit;
  font: inherit;
}

button svg { width: 20px; height: 20px; flex: none; }
a { color: inherit; text-decoration: none; }
h1, h2, h3, p { margin: 0; font-size: inherit; }
input { font: inherit; }
.defs { position: absolute; width: 0; height: 0; }
button .caret { width: 10px; height: 20px; }

/* Title bar */
.titlebar {
  display: flex;
  align-items: center;
  height: 35px;
  flex: none;
  border-top: 1px solid #b4b4b4;
  border-bottom: 1px solid #b4b4b4;
}
.brand {
  display: flex;
  align-items: center;
  align-self: stretch;
  width: 143px;
  padding-left: 3px;
  border-right: 1px solid var(--line);
}
.wordmark {
  width: 85px;
  margin-left: 3px;
  font: italic 13px/20px Lato, sans-serif;
  color: #fff;
}
.wordmark b { font-weight: 900; }
.expand { margin-left: 15px; }
.expand svg { width: 8px; height: 14px; }
.quick { display: flex; margin-left: 26px; color: #999; }
.quick .single { margin-right: 10px; }
.quick .split { gap: 6px; margin-right: 8px; }
.quick .on { color: #fff; }
.doc-title { flex: 1; text-align: center; font-weight: 400; }
.search {
  display: flex;
  align-items: center;
  width: 202px;
  height: 22px;
  padding: 0 1px 0 6px;
  border: 1px solid #ccc;
  background: #fff;
}
.search input {
  flex: 1;
  min-width: 0;
  padding: 0 6px;
  border: 0;
  background: none;
  outline: 0;
}
.search input::placeholder { color: #555; opacity: 1; }
.search .dark { margin-left: 4px; color: #777; }
.window-buttons { display: flex; margin: 0 3px; }
.window-buttons button { width: 36px; }
.white { color: #fff; }

/* Ribbon */
.ribbon {
  display: flex;
  height: 82px;
  flex: none;
  padding-top: 1px;
  border-bottom: 1px solid var(--line);
  color: #8b8b8b;
}
.group { display: flex; flex-direction: column; }
.group button { justify-content: flex-start; gap: 6px; height: 26px; white-space: nowrap; }
.group svg { width: 18px; height: 18px; }
.ruled { border-left: 1px solid #777; }
.g1 { width: 117px; padding-left: 10px; }
.g2 { width: 117px; padding-left: 11px; }
.g2 .indent { gap: 9px; }
.g3 { width: 146px; padding-left: 5px; }
.g4 { width: 97px; padding-left: 5px; }
.g5 { width: 62px; }
.large { display: flex; line-height: 13px; }
.large button { flex-direction: column; justify-content: flex-start; padding-top: 4px; gap: 1px; }
.w48 { width: 48px; }
.w46 { width: 46px; }
.w54 { width: 54px; }
.w52 { width: 52px; }
.w50 { width: 50px; }
.w34 { width: 34px; }
.collapse { margin: auto 7px 6px auto; }
.collapse svg { width: 14px; height: 14px; }

/* Workspace */
.workspace {
  flex: 1;
  min-height: 0;
  display: grid;
  grid-template-columns: 230px 1fr 49px;
  grid-template-rows: 21px 1fr 16px;
}
.tabs {
  grid-area: 1 / 1 / 2 / 3;
  z-index: 2;
  justify-self: start;
  display: grid;
  grid-template-columns: 60px 56px 75px 99px 87px 57px 60px 107px 133px 56px 121px 146px;
  line-height: 21px;
  color: #fff;
}
.tabs a {
  border-right: 1px solid var(--line);
  border-bottom: 1px solid var(--line);
  background: var(--dark);
  text-align: center;
  white-space: nowrap;
}
.tabs .active { background: var(--bg); font-weight: 600; }

/* Property manager */
.panel {
  grid-area: 2 / 1 / 3 / 2;
  z-index: 1;
  position: relative;
  border-right: 1px solid #999;
}
.grip {
  display: flex;
  align-items: center;
  height: 16px;
  margin: 3px 2px 4px 0;
  padding-left: 109px;
  border-top: 1px solid var(--line);
  border-bottom: 1px solid var(--line);
}
.dot { width: 8px; height: 8px; border: 2px solid #999; border-radius: 50%; background: #ddd; }
.pm-tabs {
  display: flex;
  height: 26px;
  margin-right: 2px;
  border-top: 1px solid var(--line);
  background: var(--dark);
}
.pm-tabs > button { width: 40px; border-right: 1px solid var(--line); border-bottom: 1px solid var(--line); }
.pm-tabs .active { background: var(--bg); border-bottom: 0; }
.pm-tabs > button:nth-of-type(5) { width: 33px; padding-left: 7px; border-right: 0; }
.pm-tabs > button svg { width: 20px; height: 20px; }
.scrollers { display: flex; flex: 1; margin-top: 5px; background: #eee; }
.scrollers button { flex: 1; border: 1px solid #aaa; }
.scrollers svg { width: 10px; height: 10px; }
.pm-title { display: flex; height: 32px; align-items: center; padding-right: 12px; }
.pm-title h2 { flex: 1; text-align: center; font-weight: 600; }
.pm-title svg { width: 14px; height: 14px; }
.confirm { display: flex; gap: 9px; height: 32px; padding: 0 0 11px 4px; }
.confirm svg { width: 18px; height: 18px; }
.block { margin: 0 5px 0 3px; padding: 6px 9px 0 4px; border-top: 1px solid #aaa; }
.block h3 {
  display: flex;
  align-items: center;
  justify-content: space-between;
  margin-right: -7px;
  font-weight: 600;
}
.params { height: 142px; }
.params h3 { margin-bottom: 5px; }
.field { display: flex; gap: 5px; height: 23px; margin-bottom: 9px; }
.flip, .angle { width: 24px; flex: none; }
.flip { border: 1px solid #222; }
.angle { display: flex; align-items: center; justify-content: center; }
.angle svg { width: 20px; height: 20px; overflow: visible; }
.picked {
  flex: 1;
  min-width: 0;
  padding: 0 3px 2px;
  border: 2px solid #68b4e8;
  outline: 0;
  background: #0078d7;
  color: #fff;
}
.number { display: flex; flex: 1; min-width: 0; }
.number input { flex: 1; min-width: 0; padding: 0 5px 2px; border: 1px solid #888; background: #fff; color: #222; }
.spin { display: flex; flex-direction: column; gap: 1px; width: 17px; }
.spin button { flex: 1; background: #e8e8e8; }
.spin svg { width: 10px; height: 6px; }
.tick { display: flex; align-items: center; gap: 3px; height: 24px; padding-left: 29px; }
.tick input { appearance: none; width: 13px; height: 13px; margin: 0; border: 1px solid #2b2b2b; background: #fff; }
.params .tick:first-of-type { margin-top: -5px; }
.colors p { height: 26px; padding-top: 4px; }
.swatch-row { display: flex; gap: 2px; height: 36px; padding-left: 27px; }
.swatch { width: 95px; height: 23px; border: 1px solid #888; box-shadow: inset 0 0 0 1px #fff; }
.green { background: #0f0; }
.yellow { background: #ff0; }
.red { background: #f00; }
.swatch-row button { width: 73px; height: 31px; border: 1px solid #adadad; background: #e1e1e1; color: #000; }
.handle {
  position: absolute;
  left: 229px;
  top: 248px;
  display: flex;
  align-items: center;
  width: 9px;
  height: 39px;
  border: 1px solid var(--line);
  border-left: 0;
  background: var(--bg);
}

/* Graphics area */
.viewport {
  grid-area: 1 / 2 / 3 / 3;
  position: relative;
  overflow: hidden;
  color: #111;
  background:
    radial-gradient(ellipse 85% 56% at 0% 0%, #fff 50%, rgba(255, 255, 255, 0) 100%),
    radial-gradient(ellipse 35% 60% at 100% 0%, rgba(255, 255, 255, 0.6), rgba(255, 255, 255, 0) 100%),
    linear-gradient(#e6e9f1 0%, #dcdfea 35%, #dcdfea 50%, #e1e4ee 55%, #f0f1f7 60%, #fbfbfd 67%, #fff 73%, #fff 88%, #f6f7fa 100%);
}
.model { display: block; width: 100%; height: 100%; }
.axis { font: 8px "Liberation Sans", sans-serif; }
.view-head { position: absolute; left: 4px; right: 0; top: 27px; display: flex; }
.tree { gap: 4px; width: 360px; justify-content: flex-start; white-space: nowrap; }
.tree svg:first-child { width: 8px; height: 10px; margin-right: 6px; }
.hud { display: flex; gap: 6px; margin-left: 3px; color: #888; }
.hud .more { gap: 4px; }
.doc-buttons { position: absolute; right: 8px; top: 5px; display: flex; gap: 6px; color: #999; }
.corner { position: absolute; right: 31px; top: 57px; width: 72px; }
.corner button:first-child svg { width: 30px; height: 24px; }
.corner button:last-child { margin: 5px 0 0 auto; }
.corner button:last-child svg { width: 26px; height: 26px; }
.taskpane {
  position: absolute;
  right: 0;
  top: 50px;
  width: 25px;
  border: 1px solid var(--line);
  border-right: 0;
}
.taskpane button { width: 100%; height: 24px; background: var(--dark); border-bottom: 1px solid var(--line); }
.taskpane button:last-child { border-bottom: 0; }
.taskpane .active { background: #aaa; }

/* Right toolbar */
.sidebar { grid-area: 1 / 3 / 4 / 4; border-left: 1px solid #111; color: #fff; }
.tools { display: flex; flex-direction: column; gap: 6px; padding: 9px 0 6px; margin: 0 1px 6px 7px; border-bottom: 1px solid var(--line); }
.tools button { justify-content: flex-start; padding-left: 1px; }
.tools .more { gap: 6px; }
.tools.second { padding: 7px 0 10px; border-top: 1px solid var(--line); }
.abc { font: 9px "Liberation Sans", sans-serif; fill: #2f2f2f; stroke: #777; stroke-width: 0.3px; }

/* Sheet tabs and status */
.sheets {
  grid-area: 3 / 1 / 4 / 3;
  display: flex;
  border-top: 1px solid var(--line);
  border-bottom: 1px solid var(--line);
  line-height: 13px;
}
.nav-keys { display: flex; gap: 1px; width: 67px; padding-left: 2px; background: #777; }
.nav-keys button { width: 16px; border: 1px solid #888; background: #a5a5a8; }
.nav-keys svg { width: 12px; height: 12px; }
.sheets a { width: 68px; text-align: center; border-right: 1px solid var(--line); background: var(--dark); }
.sheets .active { width: 57px; padding-left: 4px; background: var(--bg); font-weight: 600; }
.sheets .motion { width: 108px; padding-right: 8px; }
.status { display: flex; align-items: center; height: 19px; flex: none; padding: 0 2px 0 1px; }
.status .name { flex: 1; }
.mode { width: 179px; }
.units { width: 38px; margin-right: 15px; color: #999; }
.tag { margin-left: 24px; }
.tag svg { width: 18px; height: 16px; }
```
